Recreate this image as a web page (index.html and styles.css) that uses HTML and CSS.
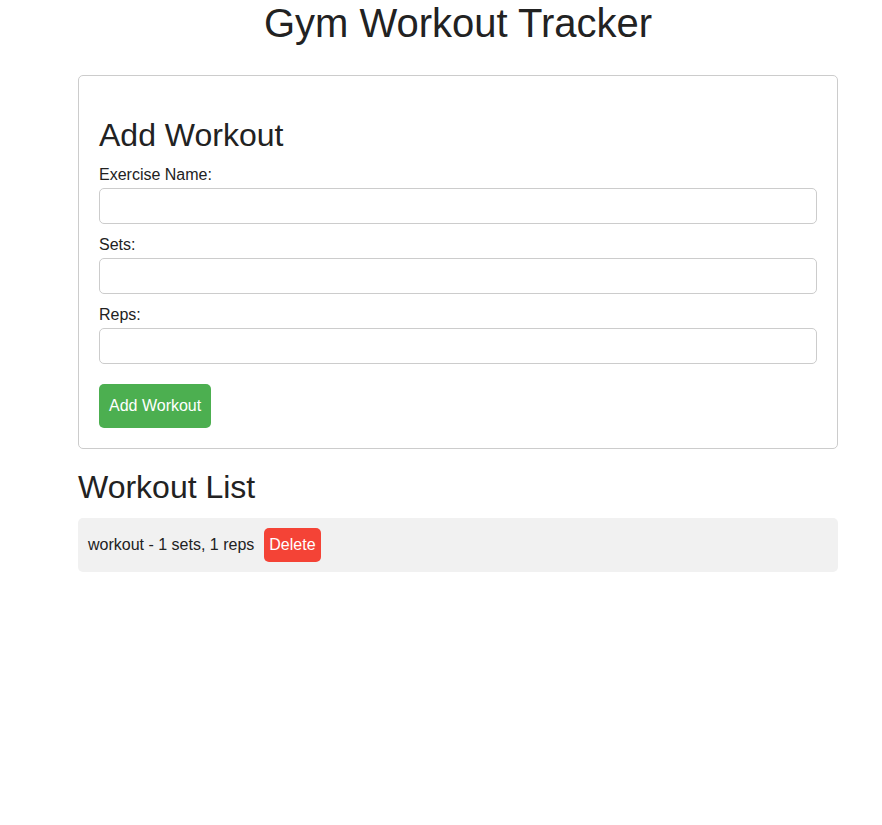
FILE: index.html
```html
<!DOCTYPE html>
<html lang="en">
<head>
<meta charset="UTF-8">
<title>Gym Workout Tracker</title>
<link rel="stylesheet" href="styles.css">
</head>
<body>
<div class="container">
  <h1 class="title">Gym Workout Tracker</h1>
  <form class="card">
    <h2 class="section-title card-title">Add Workout</h2>
    <label class="field-label" for="name">Exercise Name:</label>
    <input class="field-input" id="name" type="text">
    <label class="field-label" for="sets">Sets:</label>
    <input class="field-input" id="sets" type="text">
    <label class="field-label" for="reps">Reps:</label>
    <input class="field-input" id="reps" type="text">
    <button class="btn btn-add" type="button">Add Workout</button>
  </form>
  <h2 class="section-title list-title">Workout List</h2>
  <ul class="workout-list">
    <li class="workout-item">
      <span class="workout-text">workout - 1 sets, 1 reps</span>
      <button class="btn btn-delete" type="button">Delete</button>
    </li>
  </ul>
</div>
</body>
</html>
```
FILE: styles.css
```css
html, body {
  margin: 0;
  padding: 0;
  background: #fff;
}
body {
  font-family: "Liberation Sans", Arial, sans-serif;
  color: #222;
  font-size: 16px;
}
.container {
  width: 760px;
  margin-left: 78px;
}
.title {
  font-size: 40px;
  font-weight: normal;
  text-align: center;
  margin: 0 0 29px;
  line-height: 46px;
}
.section-title {
  font-size: 32px;
  font-weight: normal;
  line-height: 37px;
}
.card {
  border: 1px solid #ccc;
  border-radius: 5px;
  padding: 20px;
  display: flex;
  flex-direction: column;
  align-items: flex-start;
}
.card-title {
  margin: 21px 0 11px;
}
.field-label {
  display: block;
  line-height: 20px;
  margin-bottom: 3px;
}
.field-input {
  box-sizing: border-box;
  width: 100%;
  height: 36px;
  border: 1px solid #ccc;
  border-radius: 5px;
  padding: 8px;
  margin: 0 0 11px;
  font-family: inherit;
  font-size: 16px;
}
.btn {
  border: none;
  border-radius: 5px;
  color: #fff;
  font-family: inherit;
  font-size: 16px;
  line-height: 18px;
  cursor: pointer;
}
.btn-add {
  background: #4caf50;
  padding: 13px 10px;
  margin-top: 9px;
}
.list-title {
  margin: 20px 0 12px;
}
.workout-list {
  list-style: none;
  margin: 0;
  padding: 0;
}
.workout-item {
  background: #f1f1f1;
  border-radius: 5px;
  padding: 10px;
  display: flex;
  align-items: center;
  gap: 10px;
}
.btn-delete {
  background: #f44336;
  padding: 8px 5px;
}
```
